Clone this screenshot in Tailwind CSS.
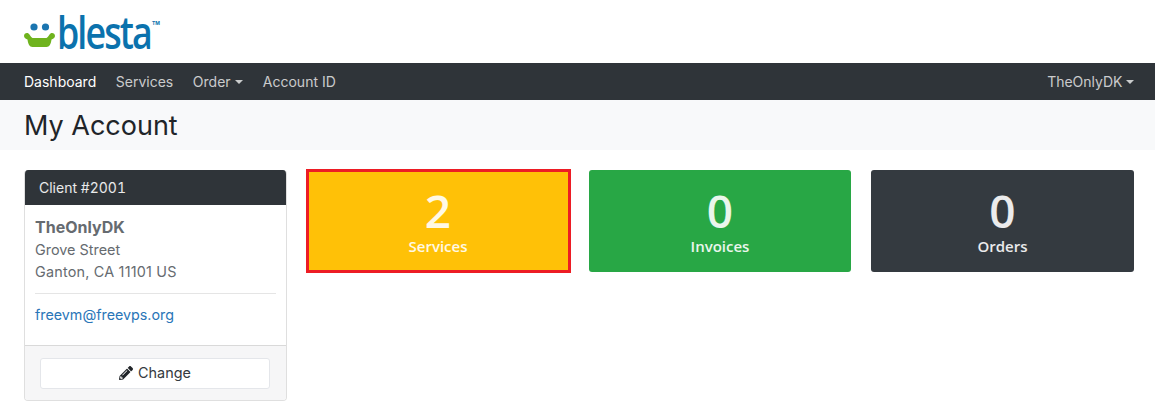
<!DOCTYPE html>
<html lang="en">
<head>
<meta charset="utf-8">
<title>My Account</title>
<script src="https://cdn.jsdelivr.net/npm/@tailwindcss/browser@4"></script>
</head>
<body class="bg-white font-['Inter','Liberation_Sans',sans-serif] text-[14px] text-[#212529] overflow-hidden h-[401px]">
<header class="h-[63px] px-[24px] flex items-start pt-[12px]">
  <div class="relative flex items-start h-[40px]">
    <svg width="33" height="36" viewBox="0 0 33 36" class="mt-[8px] shrink-0">
      <circle cx="10" cy="7" r="3.6" fill="#1b75b0"/>
      <circle cx="21.5" cy="7" r="3.6" fill="#1b75b0"/>
      <path d="M0 16 C0 13.5 2.5 12.5 4.5 13.5 C6 14.5 6.5 17 8.5 18 L22.5 18 C24.5 17 25 14.5 26.5 13.5 C28.5 12.5 31 13.5 31 16 C31 18 29 19 27.5 19.5 C27 24 25.5 27 22.5 27 L8.5 27 C5.5 27 4 24 3.5 19.5 C2 19 0 18 0 16 Z" fill="#6fb31e"/>
    </svg>
    <span class="font-['Open_Sans',sans-serif] text-[45px] leading-[40px] font-semibold tracking-[-2.4px] text-[#0b72ad] scale-x-[0.795] origin-left">blesta</span>
    <span class="absolute left-[128px] top-[8px] text-[5px] leading-[6px] font-bold text-[#0b72ad]">TM</span>
  </div>
</header>
<nav class="h-[37px] bg-[#2f3439] pl-[24px] pr-[21px] flex items-center justify-between text-[14px] text-white/75">
  <div class="flex items-center gap-[19.6px]">
    <a class="text-white">Dashboard</a>
    <a>Services</a>
    <a class="flex items-center">Order<span class="ml-[4.6px] w-0 h-0 border-x-[4px] border-x-transparent border-t-[4px] border-t-white/75"></span></a>
    <a>Account ID</a>
  </div>
  <a class="flex items-center">TheOnlyDK<span class="ml-[3.5px] w-0 h-0 border-x-[4px] border-x-transparent border-t-[4px] border-t-white/75"></span></a>
</nav>
<div class="h-[50px] bg-[#f8f9fa] px-[24px] flex items-center">
  <h1 class="text-[27px] leading-[50px] pt-[1px] font-normal text-[#212529]">My Account</h1>
</div>
<main class="pl-[24px] pr-[21px] pt-[20px] flex gap-[20px] items-start">
  <section class="w-[263px] shrink-0 h-[231px] rounded-[4px] border border-[#dfdfdf] border-t-0 overflow-hidden flex flex-col">
    <div class="h-[35px] -mx-px bg-[#2f3439] text-white/90 px-[15px] flex items-center tabular-nums">Client #2001</div>
    <div class="flex-1 px-[10px] pt-[11px] text-[#666b70]">
      <div class="text-[16px] leading-[22px] font-bold">TheOnlyDK</div>
      <div class="text-[14.4px] leading-[22px] mt-[1px]">Grove Street</div>
      <div class="text-[14.4px] leading-[22px] tracking-[0.2px]">Ganton, CA 11101 US</div>
      <hr class="mt-[10px] border-[#e5e5e5]">
      <a class="block text-[14.3px] mt-[10px] leading-[22px] text-[#2a76b8]">freevm@freevps.org</a>
    </div>
    <div class="h-[55px] bg-[#f6f6f7] border-t border-[#d9d9d9] pl-[15px] pr-[16px] pt-[12px]">
      <button class="w-full h-[31px] bg-white border border-[#e4e6ea] rounded-[3px] flex items-center justify-center gap-[5px] text-[#343a40] text-[14.4px] pb-[1px]">
        <svg width="14" height="14" viewBox="0 0 512 512" fill="#212529"><path d="M497.9 142.1l-46.1 46.1c-4.7 4.7-12.3 4.7-17 0l-111-111c-4.7-4.7-4.7-12.3 0-17l46.1-46.1c18.7-18.7 49.1-18.7 67.9 0l60.1 60.1c18.8 18.7 18.8 49.1 0 67.9zM284.2 99.8L21.6 362.4.4 483.9c-2.9 16.4 11.4 30.6 27.8 27.8l121.5-21.3 262.6-262.6c4.7-4.7 4.7-12.3 0-17l-111-111c-4.8-4.7-12.4-4.7-17.1 0zM124.1 339.9c-5.5-5.5-5.5-14.3 0-19.8l154-154c5.5-5.5 14.3-5.5 19.8 0s5.5 14.3 0 19.8l-154 154c-5.5 5.5-14.3 5.5-19.8 0zM88 424h48v36.3l-64.5 11.3-31.1-31.1L51.7 376H88v48z"/></svg>
        Change
      </button>
    </div>
  </section>
  <section class="flex-1 grid grid-cols-[262px_262px_263px] gap-x-[20px] font-['Open_Sans','Noto_Sans',sans-serif] text-white/90">
    <div class="relative h-[102px] rounded-[3px] bg-[#ffc107] flex flex-col items-center">
      <span class="text-[46px] leading-[36px] font-semibold mt-[22px]">2</span>
      <span class="text-[15px] leading-[20px] font-semibold mt-[8px]">Services</span>
      <span class="absolute left-[-1px] right-[-2px] top-[-1px] bottom-[-1px] border-[3px] border-[#ed1c24]"></span>
    </div>
    <div class="h-[102px] rounded-[3px] bg-[#28a745] flex flex-col items-center">
      <span class="text-[46px] leading-[36px] font-semibold mt-[22px]">0</span>
      <span class="text-[15px] leading-[20px] font-semibold mt-[8px]">Invoices</span>
    </div>
    <div class="h-[102px] rounded-[3px] bg-[#343a40] flex flex-col items-center">
      <span class="text-[46px] leading-[36px] font-semibold mt-[22px]">0</span>
      <span class="text-[15px] leading-[20px] font-semibold mt-[8px]">Orders</span>
    </div>
  </section>
</main>
</body>
</html>
